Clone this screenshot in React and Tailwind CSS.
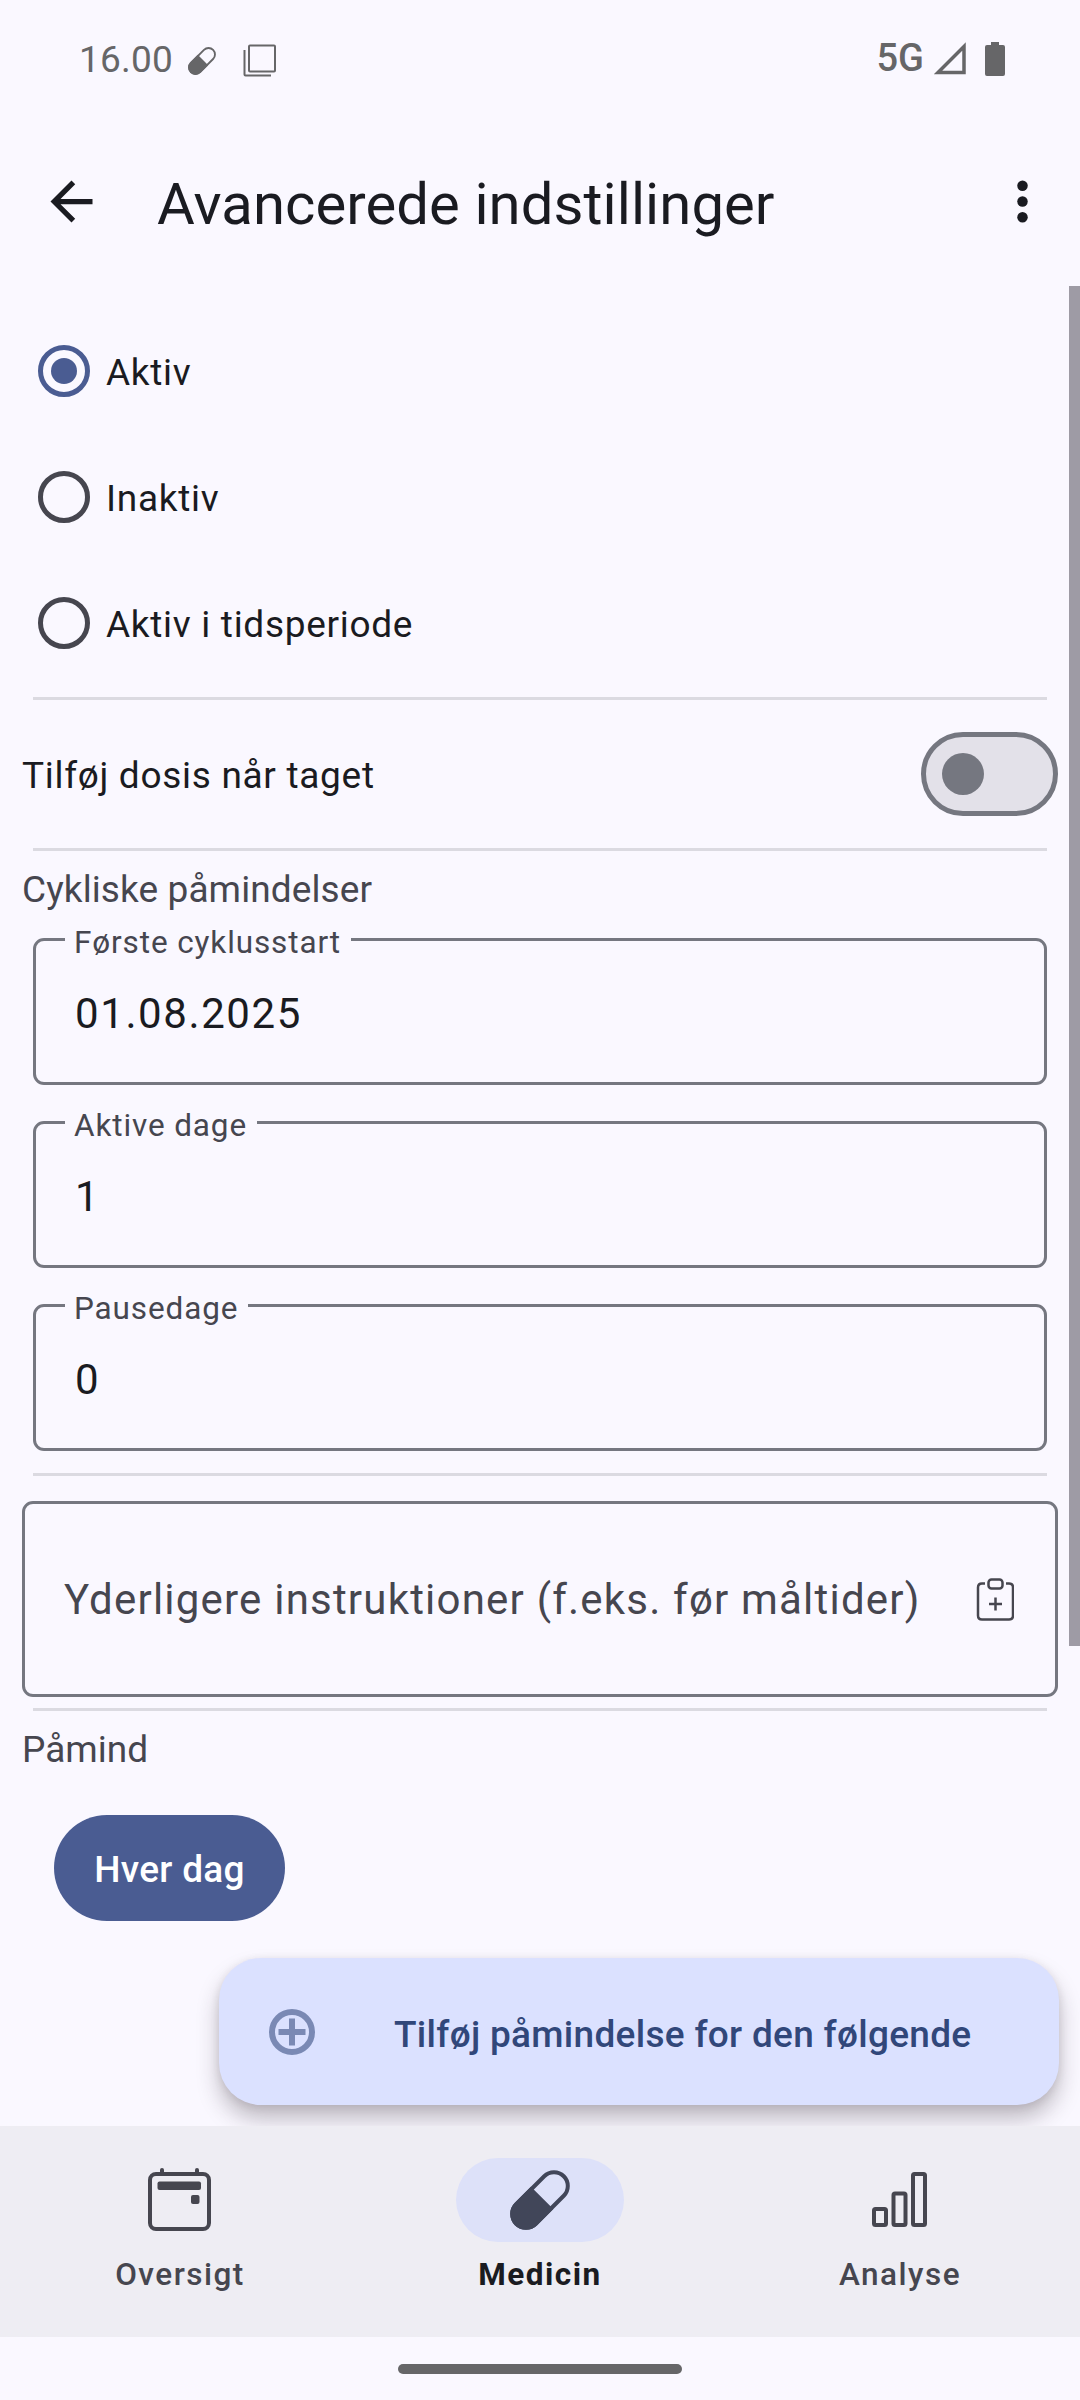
const Pill = ({ size, color }) => (
  <svg width={size} height={size} viewBox="0 0 60 60" fill="none">
    <g transform="rotate(45 30 30)">
      <rect x="16.2" y="-3.6" width="27.6" height="67.2" rx="13.8" stroke={color} strokeWidth="4" />
      <path d="M14.200 27h31.600v22.800a15.800 15.800 0 0 1-31.600 0z" fill={color} />
    </g>
  </svg>
);

const Divider = () => <div className="mx-[33px] h-[3px] shrink-0 bg-[#dbdae1]" />;

function Radio({ label, checked }) {
  return (
    <div className="flex h-[126px] items-center">
      <div
        className={
          checked
            ? "ml-[38px] flex h-[52px] w-[52px] items-center justify-center rounded-full border-[5px] border-[#4a5c92]"
            : "ml-[38px] h-[52px] w-[52px] rounded-full border-[5px] border-[#46464f]"
        }
      >
        {checked && <div className="h-[26px] w-[26px] rounded-full bg-[#4a5c92]" />}
      </div>
      <span className="ml-[16px] mt-[3px] text-[37px] leading-[43px] tracking-[0.7px]">{label}</span>
    </div>
  );
}

function Field({ label, value }) {
  return (
    <div className="relative mx-[33px] h-[147px] shrink-0 rounded-[11px] border-[3px] border-[#757780]">
      <span className="absolute left-[29px] top-[-17px] bg-[#faf8ff] pl-[9px] pr-[10px] text-[31.5px] leading-[37px] tracking-[0.88px] text-[#46464f]">
        {label}
      </span>
      <div className="ml-[39px] mt-[48px] text-[42px] leading-[50px] tracking-[1.6px]">{value}</div>
    </div>
  );
}

export default function App() {
  return (
    <div className="flex h-[2400px] w-[1080px] flex-col overflow-hidden bg-[#faf8ff] font-[Roboto,sans-serif] text-[#1a1b21]">
      {/* Status bar */}
      <header className="flex h-[118px] shrink-0 items-center text-[#666668]">
        <span className="ml-[79px] w-[93px] whitespace-nowrap text-[37px] leading-[43px] tracking-[0.2px]">16.00</span>
        <div className="ml-[16px] mt-[3px]">
          <Pill size={28} color="#666668" />
        </div>
        <svg className="ml-[27px] mt-[2px]" width="33" height="33" viewBox="0 0 33 33" fill="none" stroke="#666668" strokeWidth="2">
          <rect x="6" y="1.5" width="26" height="26" rx="1" />
          <path d="M1.5 6v24.500q0 1 1 1H28" />
        </svg>
        <span className="ml-auto mt-[-1px] text-[38px] font-medium leading-[43px]">5G</span>
        <svg className="ml-[9px]" width="34" height="34" viewBox="0 0 34 34" fill="none" stroke="#666668" strokeWidth="3.500">
          <path d="M5 30.500H31V4.500z" />
        </svg>
        <svg className="ml-[18px] mr-[75px]" width="20" height="34" viewBox="0 0 20 34" fill="#666668">
          <path d="M6 0h8v3h4q2 0 2 2v27q0 2-2 2H2q-2 0-2-2V5q0-2 2-2h4z" />
        </svg>
      </header>

      {/* Title bar */}
      <div className="flex h-[168px] shrink-0 items-center">
        <svg className="ml-[40px] mt-[-2px]" width="63" height="63" viewBox="0 0 24 24" fill="#1a1b21">
          <path d="M20 11H7.830l5.590-5.590L12 4l-8 8 8 8 1.410-1.410L7.830 13H20z" />
        </svg>
        <h1 className="ml-[54px] mt-[4px] text-[58px] leading-[68px] tracking-[0.08px]">Avancerede indstillinger</h1>
        <svg className="ml-auto mr-[26px] mt-[-1px]" width="63" height="63" viewBox="0 0 24 24" fill="#1a1b21">
          <circle cx="12" cy="6" r="2" />
          <circle cx="12" cy="12" r="2" />
          <circle cx="12" cy="18" r="2" />
        </svg>
      </div>

      {/* Scrolling content */}
      <main className="relative flex h-[1840px] shrink-0 flex-col overflow-hidden pt-[22px]">
        <div className="absolute right-0 top-0 h-[1360px] w-[11px] bg-[#9e9ba5]" />
        <Radio label="Aktiv" checked />
        <Radio label="Inaktiv" />
        <Radio label="Aktiv i tidsperiode" />
        <div className="h-[11px] shrink-0" />
        <Divider />
        <div className="flex h-[148px] shrink-0 items-center justify-between pl-[22px] pr-[22px]">
          <span className="mt-[3px] text-[37px] leading-[43px] tracking-[0.7px]">Tilføj dosis når taget</span>
          <div className="flex h-[84px] w-[137px] items-center rounded-full border-[5px] border-[#757780] bg-[#e3e1e9] pl-[16px]">
            <div className="h-[42px] w-[42px] rounded-full bg-[#757780]" />
          </div>
        </div>
        <Divider />
        <h2 className="ml-[22px] mt-[17px] h-[70px] shrink-0 text-[37px] leading-[43px] tracking-[0.1px] text-[#46464f]">Cykliske påmindelser</h2>
        <div className="flex shrink-0 flex-col gap-[36px]">
          <Field label="Første cyklusstart" value="01.08.2025" />
          <Field label="Aktive dage" value="1" />
          <Field label="Pausedage" value="0" />
        </div>
        <div className="h-[22px] shrink-0" />
        <Divider />
        <div className="mx-[22px] mb-[11px] mt-[25px] flex h-[196px] shrink-0 items-center justify-between rounded-[11px] border-[3px] border-[#757780] pl-[39px] pr-[41px] text-[#46464f]">
          <span className="mt-[1px] text-[42px] leading-[50px] tracking-[1.21px]">Yderligere instruktioner (f.eks. før måltider)</span>
          <svg width="38" height="43" viewBox="0 0 38 43" fill="none" stroke="#46464f" strokeWidth="2.500">
            <path d="M9 5.500H6q-4 0-4 4V37.500q0 4 4 4H33q4 0 4-4V9.500q0-4-4-4H30" />
            <rect x="12.500" y="1.500" width="14" height="9" rx="3" />
            <path d="M19.500 19.500v13M13 26h13" />
          </svg>
        </div>
        <Divider />
        <h2 className="ml-[22px] mt-[17px] h-[87px] shrink-0 text-[37px] leading-[43px] text-[#46464f]">Påmind</h2>
        <button className="ml-[54px] flex h-[106px] w-[231px] shrink-0 items-center justify-center rounded-full bg-[#4a5c92] pt-[3px] text-[37px] font-medium tracking-[0.3px] text-white">
          Hver dag
        </button>
        <button className="ml-[219px] mt-[37px] flex h-[147px] w-[840px] shrink-0 items-center rounded-[42px] bg-[#dbe1ff] text-[#31477a] shadow-[0_14px_22px_rgba(40,30,40,0.28),0_2px_8px_rgba(40,30,40,0.1)]">
          <svg className="ml-[49px]" width="48" height="48" viewBox="0 0 48 48" fill="none" stroke="#7a89b4" strokeWidth="6">
            <circle cx="24" cy="24" r="20" />
            <path d="M24 10.500v27M10.500 24h27" />
          </svg>
          <span className="ml-[78px] mt-[5px] text-[37px] font-medium leading-[43px] tracking-[0.3px]">Tilføj påmindelse for den følgende</span>
        </button>
      </main>

      {/* Bottom navigation */}
      <nav className="grid h-[211px] shrink-0 grid-cols-3 bg-[#eeedf3] text-[31.5px] font-medium leading-[37px] tracking-[1.5px] text-[#46464f]">
        <div className="flex flex-col items-center pt-[32px]">
          <div className="mr-[2px] flex h-[84px] items-center">
            <svg className="mt-[-2px]" width="63" height="63" viewBox="0 0 63 63" fill="#46464f">
              <rect x="2" y="6" width="59" height="55" rx="6" fill="none" stroke="#46464f" strokeWidth="4" />
              <rect x="9.500" y="13.500" width="43.500" height="8.500" rx="2" />
              <rect x="43" y="27" width="8.500" height="9" rx="2" />
              <rect x="12" y="0" width="4" height="6" rx="2" />
              <rect x="47" y="0" width="4" height="6" rx="2" />
            </svg>
          </div>
          <span className="mt-[14px]">Oversigt</span>
        </div>
        <div className="flex flex-col items-center pt-[32px]">
          <div className="flex h-[84px] w-[168px] items-center justify-center rounded-full bg-[#dde1f9]">
            <Pill size={60} color="#414659" />
          </div>
          <span className="mt-[14px] font-bold text-[#1a1b21]">Medicin</span>
        </div>
        <div className="flex flex-col items-center pt-[32px]">
          <div className="flex h-[84px] items-center">
            <svg width="56" height="56" viewBox="0 0 56 56" fill="none" stroke="#46464f" strokeWidth="4">
              <rect x="2" y="37" width="12" height="16" rx="1.500" />
              <rect x="21.500" y="21.500" width="12" height="31.500" rx="1.500" />
              <rect x="41" y="2" width="12" height="51" rx="1.500" />
            </svg>
          </div>
          <span className="mt-[14px]">Analyse</span>
        </div>
      </nav>

      {/* Gesture handle */}
      <div className="mx-auto mt-[27px] h-[10px] w-[284px] rounded-full bg-[#666668]" />
    </div>
  );
}
